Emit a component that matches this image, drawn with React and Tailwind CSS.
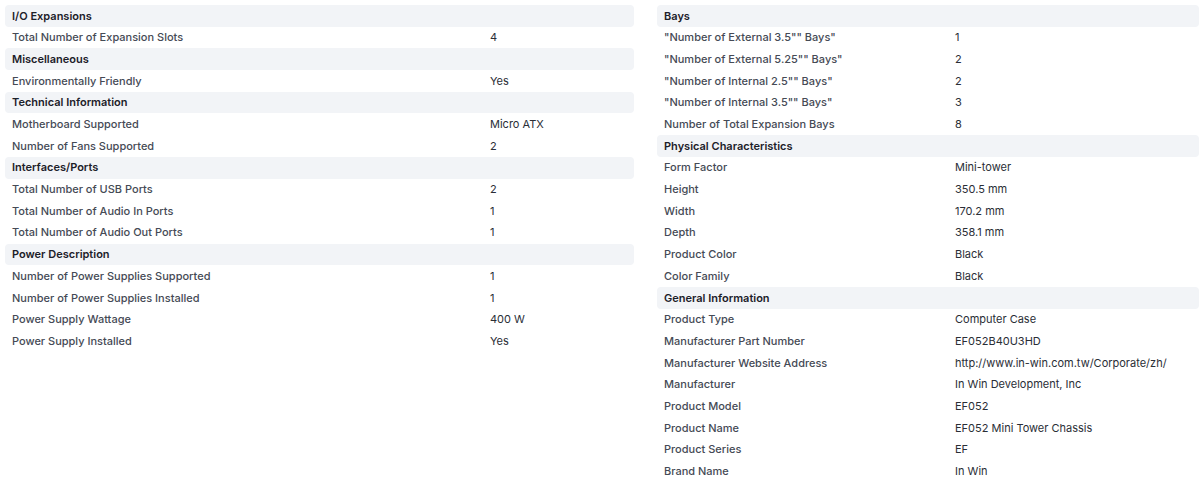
const left = [
  { title: "I/O Expansions", rows: [["Total Number of Expansion Slots", "4"]] },
  { title: "Miscellaneous", rows: [["Environmentally Friendly", "Yes"]] },
  {
    title: "Technical Information",
    rows: [
      ["Motherboard Supported", "Micro ATX"],
      ["Number of Fans Supported", "2"],
    ],
  },
  {
    title: "Interfaces/Ports",
    rows: [
      ["Total Number of USB Ports", "2"],
      ["Total Number of Audio In Ports", "1"],
      ["Total Number of Audio Out Ports", "1"],
    ],
  },
  {
    title: "Power Description",
    rows: [
      ["Number of Power Supplies Supported", "1"],
      ["Number of Power Supplies Installed", "1"],
      ["Power Supply Wattage", "400 W"],
      ["Power Supply Installed", "Yes"],
    ],
  },
];

const right = [
  {
    title: "Bays",
    rows: [
      ['"Number of External 3.5"" Bays"', "1"],
      ['"Number of External 5.25"" Bays"', "2"],
      ['"Number of Internal 2.5"" Bays"', "2"],
      ['"Number of Internal 3.5"" Bays"', "3"],
      ["Number of Total Expansion Bays", "8"],
    ],
  },
  {
    title: "Physical Characteristics",
    rows: [
      ["Form Factor", "Mini-tower"],
      ["Height", "350.5 mm"],
      ["Width", "170.2 mm"],
      ["Depth", "358.1 mm"],
      ["Product Color", "Black"],
      ["Color Family", "Black"],
    ],
  },
  {
    title: "General Information",
    rows: [
      ["Product Type", "Computer Case"],
      ["Manufacturer Part Number", "EF052B40U3HD"],
      ["Manufacturer Website Address", "http://www.in-win.com.tw/Corporate/zh/"],
      ["Manufacturer", "In Win Development, Inc"],
      ["Product Model", "EF052"],
      ["Product Name", "EF052 Mini Tower Chassis"],
      ["Product Series", "EF"],
      ["Brand Name", "In Win"],
    ],
  },
];

function SpecColumn({ groups, width, labelWidth }) {
  return (
    <div className={`flex flex-col ${width}`}>
      {groups.map((g) => (
        <div key={g.title} className="flex flex-col">
          <div className="h-[21.7px] flex items-center px-[7px] rounded bg-[#f2f4f7] text-[11px] font-semibold text-[#1c2029]">
            {g.title}
          </div>
          {g.rows.map(([k, v]) => (
            <div key={k} className="h-[21.7px] flex items-center px-[7px] text-[11px]">
              <div className={`${labelWidth} shrink-0 font-medium text-[#454a55]`}>{k}</div>
              <div className="text-[#2a2e36]">{v}</div>
            </div>
          ))}
        </div>
      ))}
    </div>
  );
}

export default function App() {
  return (
    <div
      className="w-[1200px] h-[489px] overflow-hidden bg-white flex gap-[23px] pl-[5px] pt-[5px]"
      style={{ fontFamily: "Inter, 'Noto Sans', sans-serif" }}
    >
      <SpecColumn groups={left} width="w-[629px]" labelWidth="w-[478px]" />
      <SpecColumn groups={right} width="w-[542px]" labelWidth="w-[291px]" />
    </div>
  );
}
